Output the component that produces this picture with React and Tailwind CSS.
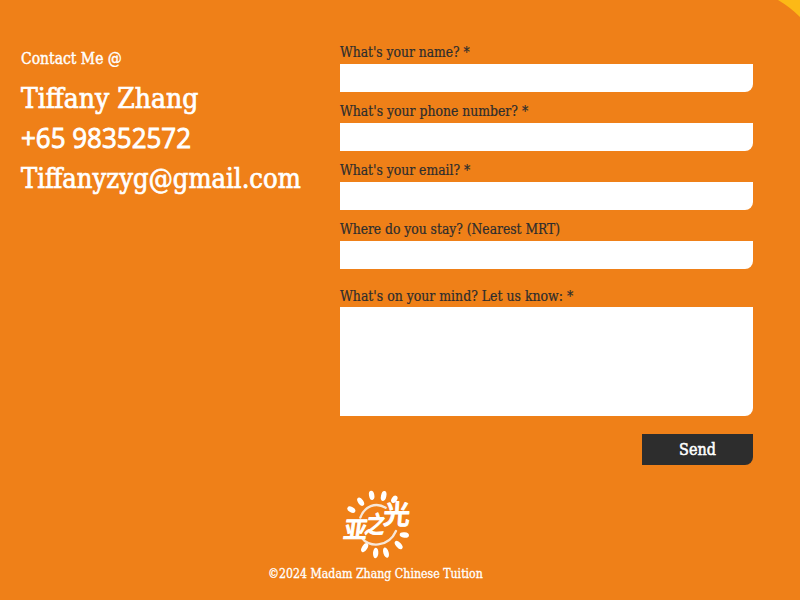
const slab = "[font-family:'DejaVu_Serif_Condensed','DejaVu_Serif',serif] [font-stretch:condensed]";

const fields = [
  { label: "What's your name? *", fit: 'scale-x-[0.98]' },
  { label: "What's your phone number? *", fit: 'scale-x-[0.988]' },
  { label: "What's your email? *", fit: 'scale-x-[0.984]' },
  { label: 'Where do you stay? (Nearest MRT)', fit: 'scale-x-[0.98]' },
];

// Centre, rotation and half length of each sun ray
const rays = [
  [49, 74, -62, 13],
  [77, 50, -34, 14],
  [110, 31, -10, 14],
  [146, 33, 12, 15],
  [178, 43, 34, 12],
  [208, 150, 95, 14],
  [191, 180, 138, 15],
  [153, 203, 163, 16],
  [122, 204, 183, 16],
  [89, 188, 212, 15],
];

function SunLogo() {
  return (
    <svg viewBox="0 0 240 234" className="h-[78px] w-20" fill="#fff">
      <path
        d="M152 68C122 50 88 64 76 98M80 158C98 187 160 190 183 138"
        fill="none"
        stroke="#f7e8da"
        strokeWidth="7"
        strokeLinecap="round"
      />
      {rays.map(([x, y, angle, r]) => (
        <ellipse key={`${x}-${y}`} cx={x} cy={y} rx="8" ry={r} transform={`rotate(${angle} ${x} ${y})`} />
      ))}
      <g
        className="font-medium [font-family:'Noto_Sans_CJK_SC',sans-serif]"
        stroke="#fff"
        strokeWidth="3"
        strokeLinejoin="round"
      >
        <text transform="translate(23 160) skewX(-8)" fontSize="70">亚</text>
        <text transform="translate(87 144) skewX(-12) scale(0.95 1.15)" fontSize="62">之</text>
        <text transform="translate(143 116) skewX(-4)" fontSize="80">光</text>
      </g>
    </svg>
  );
}

function Label({ children, fit }) {
  return (
    <span
      className={`block w-max origin-left text-[14px] leading-5 whitespace-nowrap text-[#2d2d2d] [-webkit-text-stroke:0.2px_#2d2d2d] ${fit}`}
    >
      {children}
    </span>
  );
}

export default function App() {
  return (
    <main className={`relative h-[600px] w-[800px] overflow-hidden bg-[#ef8018] text-white ${slab}`}>
      <svg viewBox="0 0 22 17" className="absolute top-0 right-0 h-[17px] w-[22px]">
        <path d="M0 0H22V17Q12 7 0 0Z" fill="#fcb916" />
      </svg>
      <div className="flex pt-[42px]">
        <section className="w-[340px] shrink-0 pl-[21px] whitespace-nowrap">
          <p className="mt-[5px] w-max origin-left scale-x-[0.97] text-[16px] leading-6 [-webkit-text-stroke:0.4px_white]">
            Contact Me @
          </p>
          <div className="mt-2 text-[28px] leading-10 [-webkit-text-stroke:0.7px_white]">
            <p className="w-max origin-left">Tiffany Zhang</p>
            <p className="-mt-0.5 mb-0.5 w-max origin-left scale-x-[0.927] [-webkit-text-stroke:0.9px_white] [font-family:'Open_Sans',sans-serif] [font-stretch:normal]">
              +65 98352572
            </p>
            <p className="w-max origin-left scale-x-[0.967]">Tiffanyzyg@gmail.com</p>
          </div>
        </section>
        <form className="w-[413px]">
          {fields.map(({ label, fit }) => (
            <label key={label} className="block h-[59px]">
              <Label fit={fit}>{label}</Label>
              <input className="mt-0.5 block h-7 w-full rounded-br-lg bg-white text-black outline-none" />
            </label>
          ))}
          <label className="mt-2 block">
            <Label fit="scale-x-[0.992]">What's on your mind? Let us know: *</Label>
            <textarea className="mt-[1px] block h-[109px] w-full resize-none rounded-br-lg bg-white text-black outline-none" />
          </label>
          <button
            type="button"
            className="mt-[18px] ml-auto flex h-[31px] w-[111px] items-center justify-center rounded-br-lg bg-[#2d2d2d] text-[16px] [-webkit-text-stroke:0.5px_white]"
          >
            <span>Send</span>
          </button>
        </form>
      </div>
      <footer className="mt-5 ml-[268px] w-[215px]">
        <div className="ml-[67px]">
          <SunLogo />
        </div>
        <p className="mt-px w-max origin-left scale-x-[1.02] text-[12px] leading-5 whitespace-nowrap [-webkit-text-stroke:0.3px_white]">
          ©2024 Madam Zhang Chinese Tuition
        </p>
      </footer>
    </main>
  );
}
